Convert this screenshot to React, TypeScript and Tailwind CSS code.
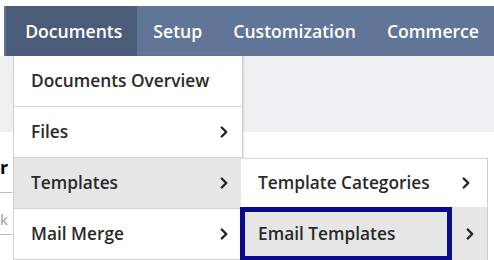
import { ChevronRight } from 'lucide-react';

const font = { fontFamily: '"Open Sans", "Noto Sans", sans-serif' };

const Chevron = () => <ChevronRight className="w-[18px] h-[18px] text-[#222]" strokeWidth={3.2} />;

const NavTab = ({ label, active }: { label: string; active?: boolean }) => (
  <div
    className={`h-full flex items-center pr-[15px] text-white text-[17.6px] font-semibold ${
      active ? 'bg-[#4b5c79] pl-[19px]' : 'pl-[16px]'
    }`}
  >
    {label}
  </div>
);

const MenuItem = ({ label, arrow, active }: { label: string; arrow?: boolean; active?: boolean }) => (
  <div
    className={`h-[51px] flex items-center justify-between pl-[17px] pr-[9px] border-b border-[#d4d4d4] text-[17.3px] font-semibold text-[#2a2a2a] ${
      active ? 'bg-[#e6e6e6]' : 'bg-white'
    }`}
  >
    <span>{label}</span>
    {arrow && <Chevron />}
  </div>
);

export default function App() {
  return (
    <div className="relative w-[494px] h-[260px] overflow-hidden bg-white" style={font}>
      {/* nav bar */}
      <div className="mt-[6px] ml-[4px] h-[50px] flex bg-[#607597]">
        <div className="w-[9px] h-full bg-[#5c7194]" />
        <NavTab label="Documents" active />
        <NavTab label="Setup" />
        <NavTab label="Customization" />
        <NavTab label="Commerce" />
      </div>

      {/* page behind menus */}
      <div className="h-[76px] bg-[#eef0f4]" />
      <div className="relative h-[128px]">
        <div className="absolute left-0 top-[22px] text-[18px] font-bold text-black">r</div>
        <div className="absolute left-0 top-[60px] w-[12px] border-t border-[#bbb]" />
        <div className="absolute left-0 top-[76px] text-[15px] text-[#999]">k</div>
        <div className="absolute left-0 top-[102px] w-[12px] border-t border-[#bbb]" />
      </div>

      {/* main dropdown */}
      <div className="absolute left-[13px] top-[56px] w-[230px] border-l border-r border-[#cfcfcf] shadow-[1px_0_2px_rgba(0,0,0,0.1)]">
        <MenuItem label="Documents Overview" />
        <MenuItem label="Files" arrow />
        <MenuItem label="Templates" arrow active />
        <MenuItem label="Mail Merge" arrow />
      </div>

      {/* submenu */}
      <div className="absolute left-[241px] top-[158px] w-[247px] border-r border-[#cfcfcf]">
        <div className="h-[49px] flex items-center justify-between pl-[17px] pr-[12px] bg-white border-t border-[#d4d4d4] text-[17.3px] font-semibold text-[#2a2a2a]">
          <span>Template Categories</span>
          <Chevron />
        </div>
        <div className="h-[54px] flex bg-[#e6e6e6]">
          <div className="w-[212px] -ml-[1px] flex items-center pl-[13px] border-[5px] border-[#0a0a8c] text-[17.3px] font-semibold text-[#2a2a2a]">
            Email Templates
          </div>
          <div className="flex-1 flex items-center justify-center">
            <Chevron />
          </div>
        </div>
      </div>
    </div>
  );
}
